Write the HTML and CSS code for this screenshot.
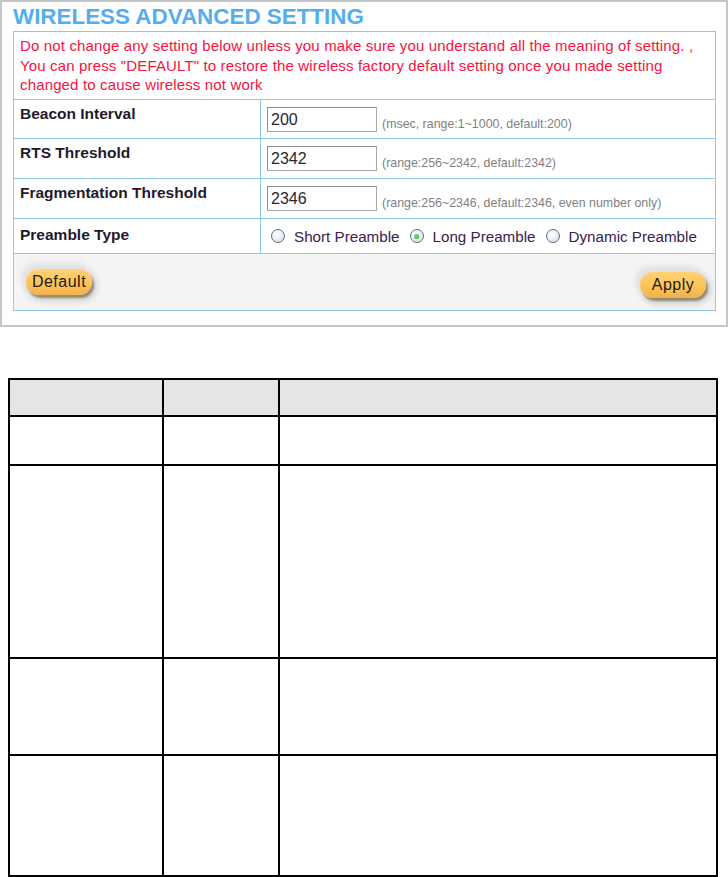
FILE: index.html
```html
<!DOCTYPE html>
<html>
<head>
<meta charset="utf-8">
<link rel="stylesheet" href="styles.css">
</head>
<body>
<div class="panel">
  <div class="title">WIRELESS ADVANCED SETTING</div>
  <div class="box">
    <div class="warn">Do not change any setting below unless you make sure you understand all the meaning of setting. ,<br>You can press "DEFAULT" to restore the wireless factory default setting once you made setting<br>changed to cause wireless not work</div>
    <div class="row r39">
      <div class="label">Beacon Interval</div>
      <div class="field"><input class="txt" type="text" value="200"><span class="hint">(msec, range:1~1000, default:200)</span></div>
    </div>
    <div class="row r40">
      <div class="label">RTS Threshold</div>
      <div class="field"><input class="txt" type="text" value="2342"><span class="hint">(range:256~2342, default:2342)</span></div>
    </div>
    <div class="row r40">
      <div class="label">Fragmentation Threshold</div>
      <div class="field"><input class="txt" type="text" value="2346"><span class="hint">(range:256~2346, default:2346, even number only)</span></div>
    </div>
    <div class="row r35">
      <div class="label label-pre">Preamble Type</div>
      <div class="field field-pre">
        <label class="opt"><input class="rad" type="radio" name="pre"><span>Short Preamble</span></label>
        <label class="opt"><input class="rad" type="radio" name="pre" checked><span>Long Preamble</span></label>
        <label class="opt"><input class="rad" type="radio" name="pre"><span>Dynamic Preamble</span></label>
      </div>
    </div>
    <div class="row btnrow">
      <button class="btn btn-default">Default</button>
      <button class="btn btn-apply">Apply</button>
    </div>
  </div>
</div>

<div class="grid">
  <div class="cell head"></div><div class="cell head"></div><div class="cell head"></div>
  <div class="cell"></div><div class="cell"></div><div class="cell"></div>
  <div class="cell"></div><div class="cell"></div><div class="cell"></div>
  <div class="cell"></div><div class="cell"></div><div class="cell"></div>
  <div class="cell"></div><div class="cell"></div><div class="cell"></div>
</div>
</body>
</html>
```
FILE: styles.css
```css
html, body {
  margin: 0;
  padding: 0;
  background: #ffffff;
  height: 877px;
  overflow: hidden;
}
body {
  font-family: "Liberation Sans", Arial, sans-serif;
}
.panel {
  box-sizing: border-box;
  width: 728px;
  height: 327px;
  border: 2px solid #c6c6c6;
  padding: 3px 0 0 11px;
}
.title {
  height: 26px;
  font-size: 22.4px;
  line-height: 24px;
  font-weight: bold;
  color: #55aeec;
  white-space: nowrap;
}
.box {
  box-sizing: border-box;
  width: 703px;
  border: 1px solid #8ec8f0;
}
.warn {
  box-sizing: border-box;
  height: 67px;
  padding: 4px 0 0 6px;
  font-size: 15px;
  letter-spacing: 0.15px;
  line-height: 19.5px;
  color: #f7123f;
  white-space: nowrap;
}
.row {
  box-sizing: border-box;
  display: flex;
  border-top: 1px solid #8ec8f0;
}
.r39 { height: 39px; }
.r40 { height: 40px; }
.r35 { height: 35px; }
.label {
  box-sizing: border-box;
  width: 246px;
  flex: none;
  padding: 5px 0 0 6px;
  font-size: 15.5px;
  line-height: 17px;
  font-weight: bold;
  color: #1e1a2c;
  white-space: nowrap;
}
.label-pre { padding-top: 7px; }
.field {
  flex: 1;
  display: flex;
  align-items: flex-start;
  border-left: 1px solid #8ec8f0;
  padding: 7px 0 0 6px;
  box-sizing: border-box;
}
.txt {
  box-sizing: border-box;
  width: 110px;
  height: 25px;
  margin: 0;
  padding: 0 3px;
  border: 1px solid #a8a8a8;
  border-top-color: #8e8e8e;
  border-left-color: #8e8e8e;
  font-family: "Liberation Sans", Arial, sans-serif;
  font-size: 16px;
  color: #2a1f36;
  background: #ffffff;
  outline: none;
}
.hint {
  margin: 10px 0 0 5px;
  font-size: 12.4px;
  line-height: 14px;
  color: #7f7f7f;
  white-space: nowrap;
}
.field-pre {
  align-items: center;
  padding: 0 0 0 10px;
  gap: 9px;
}
.opt {
  display: flex;
  align-items: center;
  gap: 9px;
  font-size: 15.2px;
  line-height: 17px;
  color: #3c2150;
  white-space: nowrap;
}
.opt + .opt { margin-left: 1px; }
.rad {
  -webkit-appearance: none;
  appearance: none;
  box-sizing: border-box;
  width: 14px;
  height: 14px;
  margin: 0;
  border: 1px solid #5b6f85;
  border-radius: 50%;
  background: radial-gradient(circle at 40% 35%, #ffffff 0%, #eef1f4 45%, #cdd4dc 100%);
  position: relative;
}
.rad:checked::after {
  content: "";
  position: absolute;
  left: 3.5px;
  top: 3.5px;
  width: 5px;
  height: 5px;
  border-radius: 50%;
  background: radial-gradient(circle at 40% 40%, #7be37b, #1f9f2a);
}
.btnrow {
  height: 57px;
  background: #f4f4f4;
  justify-content: space-between;
  align-items: flex-start;
}
.btn {
  box-sizing: border-box;
  width: 66px;
  height: 26px;
  padding: 0;
  border: none;
  border-radius: 13px;
  background: linear-gradient(#ffd274, #fcc35a 55%, #f1b24a);
  box-shadow: 2px 3px 2px rgba(95, 80, 40, 0.55), -3px -4px 5px 2px #e2e2e2, 3px 4px 6px 2px #cfcfcf;
  font-family: "Liberation Sans", Arial, sans-serif;
  font-size: 16px;
  letter-spacing: 0.5px;
  color: #1f1a14;
  line-height: 26px;
}
.btn-default {
  margin: 15px 0 0 12px;
}
.btn-apply {
  margin: 18px 9px 0 0;
}
.grid {
  margin: 51px 0 0 8px;
  width: 710px;
  box-sizing: border-box;
  display: grid;
  grid-template-columns: 152px 114px 436px;
  grid-template-rows: 35px 47px 191px 95px 119px;
  gap: 2px;
  padding: 2px;
  background: #000000;
}
.cell {
  background: #ffffff;
}
.cell.head {
  background: #e5e5e5;
}
```
